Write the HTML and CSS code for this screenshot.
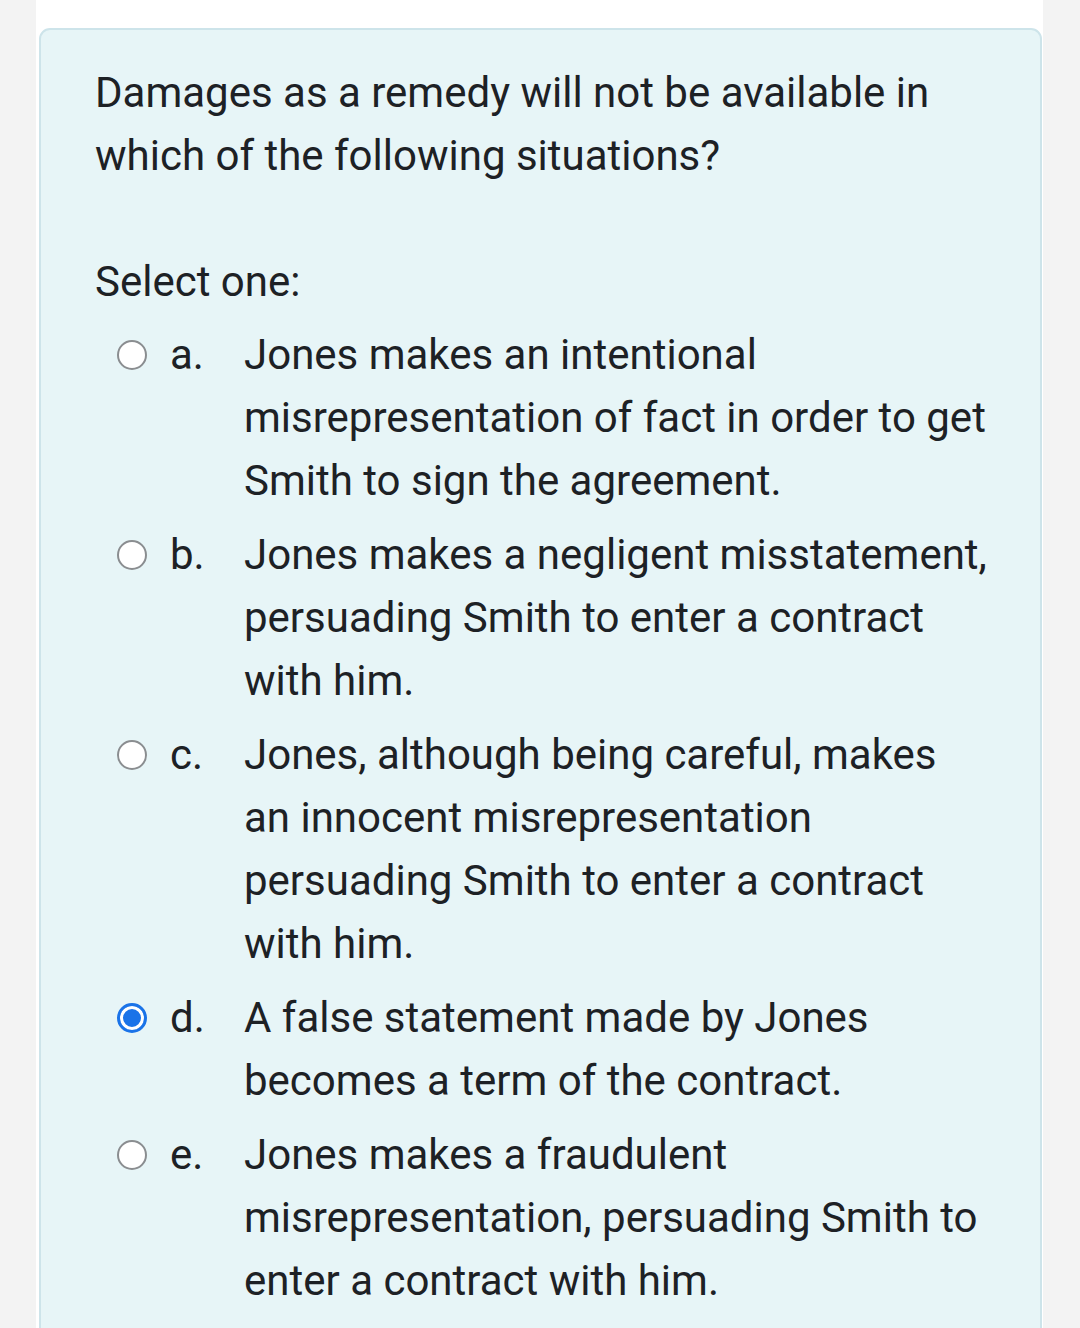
FILE: index.html
```html
<!DOCTYPE html>
<html>
<head>
<meta charset="utf-8">
<link rel="stylesheet" href="styles.css">
</head>
<body>
<div class="page">
  <div class="card">
    <div class="qtext">Damages as a remedy will not be available in which of the following situations?</div>
    <div class="prompt">Select one:</div>
    <div class="answers">
      <div class="opt">
        <span class="radio"></span>
        <span class="letter">a.</span>
        <span class="label">Jones makes an intentional misrepresentation of fact in order to get Smith to sign the agreement.</span>
      </div>
      <div class="opt">
        <span class="radio"></span>
        <span class="letter">b.</span>
        <span class="label">Jones makes a negligent misstatement, persuading Smith to enter a contract with him.</span>
      </div>
      <div class="opt">
        <span class="radio"></span>
        <span class="letter">c.</span>
        <span class="label">Jones, although being careful, makes an innocent misrepresentation persuading Smith to enter a contract with him.</span>
      </div>
      <div class="opt">
        <span class="radio checked"></span>
        <span class="letter">d.</span>
        <span class="label">A false statement made by Jones becomes a term of the contract.</span>
      </div>
      <div class="opt">
        <span class="radio"></span>
        <span class="letter">e.</span>
        <span class="label">Jones makes a fraudulent misrepresentation, persuading Smith to enter a contract with him.</span>
      </div>
    </div>
  </div>
</div>
</body>
</html>
```

FILE: styles.css
```css
html, body {
  margin: 0;
  padding: 0;
}
body {
  background: #f3f3f3;
  font-family: Roboto, "Noto Sans", sans-serif;
  color: #1d2125;
  height: 1328px;
  overflow: hidden;
}
.page {
  margin: 0 37px 0 36px;
  background: #ffffff;
  padding: 28px 1px 0 3px;
  height: 1500px;
}
.card {
  background: #e7f5f7;
  border: 2px solid #cde4ea;
  border-radius: 11px;
  padding: 31px 50px 60px 54px;
  font-size: 42px;
  line-height: 63px;
  min-height: 1400px;
}
.qtext {
  margin-bottom: 63px;
  padding-right: 4px;
}
.prompt {
  margin-bottom: 10px;
}
.answers {
  padding-left: 22px;
}
.opt {
  display: flex;
  align-items: flex-start;
  margin-bottom: 11px;
}
.radio {
  flex: none;
  width: 30px;
  height: 30px;
  box-sizing: border-box;
  border: 2.5px solid #8a8d90;
  border-radius: 50%;
  background: #ffffff;
  margin-top: 17px;
  margin-right: 23px;
}
.radio.checked {
  border: 3px solid #1a73e8;
  background: #1a73e8;
  box-shadow: inset 0 0 0 3px #ffffff;
  background-clip: padding-box;
}
.letter {
  flex: none;
  width: 74px;
}
.label {
  flex: 1;
}
```
